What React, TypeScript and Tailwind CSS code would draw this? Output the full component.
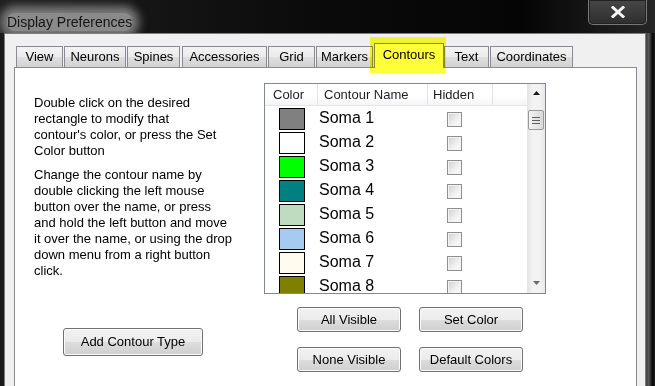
import React from "react";

type Tab = { label: string; className: string; selected?: boolean };

const tabs: Tab[] = [
  { label: "View", className: "ml-[11px] w-[47px]" },
  { label: "Neurons", className: "ml-[1px] w-[62px]" },
  { label: "Spines", className: "ml-[1px] w-[53px]" },
  { label: "Accessories", className: "ml-[2px] w-[85px]" },
  { label: "Grid", className: "ml-[1px] w-[47px]" },
  { label: "Markers", className: "ml-[1px] w-[57px]" },
  { label: "Contours", className: "ml-[1px] w-[70px]", selected: true },
  { label: "Text", className: "ml-0 w-[45px]" },
  { label: "Coordinates", className: "ml-[1px] w-[83px]" },
];

const contours = [
  { name: "Soma 1", swatch: "bg-[#808080]" },
  { name: "Soma 2", swatch: "bg-[#ffffff]" },
  { name: "Soma 3", swatch: "bg-[#00ff00]" },
  { name: "Soma 4", swatch: "bg-[#008080]" },
  { name: "Soma 5", swatch: "bg-[#c0dcc0]" },
  { name: "Soma 6", swatch: "bg-[#a6caf0]" },
  { name: "Soma 7", swatch: "bg-[#fffbf0]" },
  { name: "Soma 8", swatch: "bg-[#808000]" },
];

function WinButton({ label, className }: { label: string; className: string }) {
  return (
    <button
      type="button"
      className={`flex items-center justify-center rounded-[3px] border border-[#707070] bg-[linear-gradient(#f2f2f2_0%,#ebebeb_50%,#dddddd_51%,#cfcfcf_100%)] text-[13px] text-black shadow-[inset_0_0_0_1px_#fbfbfb] ${className}`}
    >
      {label}
    </button>
  );
}

function Checkbox() {
  return (
    <span className="block size-[15px] border border-[#8e8f8f] bg-[linear-gradient(135deg,#cfcfcf,#f2f2f2_60%,#fbfbfb)] shadow-[inset_0_0_0_1px_#f3f3f3]" />
  );
}

function ScrollBar() {
  return (
    <div className="flex h-full w-[18px] flex-col items-center bg-[linear-gradient(90deg,#e3e3e3,#f2f2f2_30%,#f2f2f2_70%,#e8e8e8)]">
      <div className="flex h-[17px] w-full items-center justify-center">
        <svg width="7" height="4" viewBox="0 0 7 4">
          <path d="M3.5 0 L7 4 L0 4 Z" fill="#1a1a1a" />
        </svg>
      </div>
      <div className="mt-[9px] flex h-[20px] w-[16px] flex-col items-center justify-center gap-[2px] rounded-[2px] border border-[#9a9a9a] bg-[linear-gradient(90deg,#f3f3f3,#e6e6e6_50%,#d8d8d8)]">
        <span className="block h-px w-[8px] bg-[#606060]" />
        <span className="block h-px w-[8px] bg-[#606060]" />
        <span className="block h-px w-[8px] bg-[#606060]" />
      </div>
      <div className="flex-1" />
      <div className="flex h-[20px] w-full items-center justify-center">
        <svg width="7" height="4" viewBox="0 0 7 4">
          <path d="M0 0 L7 0 L3.5 4 Z" fill="#6a6a6a" />
        </svg>
      </div>
    </div>
  );
}

function ContourList() {
  return (
    <div className="flex h-[211px] w-[282px] border border-[#828790] bg-white">
      <div className="flex w-[262px] flex-col overflow-hidden">
        <div className="flex h-[22px] shrink-0 border-b border-[#e5e5e5] bg-[linear-gradient(#ffffff_0%,#ffffff_55%,#f4f5f7_100%)] text-[13px] leading-[21px] text-[#1e1e1e]">
          <div className="w-[53px] border-r border-[#e3e3e3] pl-[8px]">Color</div>
          <div className="w-[110px] border-r border-[#e3e3e3] pl-[6px]">Contour Name</div>
          <div className="w-[65px] border-r border-[#e3e3e3] pl-[5px]">Hidden</div>
          <div className="flex-1" />
        </div>
        {contours.map((c) => (
          <div key={c.name} className="flex h-[24px] shrink-0">
            <div className="w-[53px] pl-[14px] pt-[2px]">
              <span className={`block h-[22px] w-[26px] border border-black ${c.swatch}`} />
            </div>
            <div className="flex w-[110px] items-center pl-px text-[16px] text-black">{c.name}</div>
            <div className="w-[65px] pl-[19px] pt-[6px]">
              <Checkbox />
            </div>
          </div>
        ))}
      </div>
      <ScrollBar />
    </div>
  );
}

export default function App() {
  return (
    <div className="relative h-[386px] w-[655px] overflow-hidden bg-black font-['Liberation_Sans',Arial,sans-serif]">
      {/* title bar */}
      <div className="h-[33px] overflow-hidden bg-[linear-gradient(90deg,#1e1e1e_0%,#0a0a0a_50%,#050505_80%,#262626_100%)] pl-[7px] pt-[10px]">
        <span className="inline-block rounded-[8px] bg-[#8a8a8a] text-[14px] leading-[18px] text-[#151515] shadow-[0_0_10px_7px_#7c7c7c]">
          Display Preferences
        </span>
      </div>
      <div className="absolute left-[588px] top-0 flex h-[25px] w-[59px] items-center justify-center rounded-b-[5px] border border-t-0 border-[#777777] bg-[linear-gradient(#474747,#2e2e2e)] shadow-[inset_0_0_0_1px_#222]">
        <svg width="14" height="12" viewBox="0 0 14 12">
          <path d="M2 1.5 L12 10.5 M12 1.5 L2 10.5" stroke="#f4f4f4" strokeWidth="3" strokeLinecap="square" />
        </svg>
      </div>

      <div className="flex">
        <div className="w-[4px] bg-[#1a1a1a]" />
        <div className="h-[353px] w-[642px] border-x border-t border-[#7d7d7d] bg-[#f0f0f0]">
          {/* tabs */}
          <div className="mt-[9px] flex h-[24px] items-end text-[13px] text-black">
            {tabs.map((t) =>
              t.selected ? (
                <div
                  key={t.label}
                  className={`relative z-10 -mb-px flex h-[25px] items-center justify-center border-x border-t border-[#898c95] bg-white pb-[2px] ${t.className}`}
                >
                  {t.label}
                </div>
              ) : (
                <div
                  key={t.label}
                  className={`flex h-[21px] items-center justify-center border-x border-t border-[#898c95] bg-[linear-gradient(#f3f3f3_0%,#ebebeb_50%,#dedede_51%,#d2d2d2_100%)] ${t.className}`}
                >
                  {t.label}
                </div>
              ),
            )}
          </div>

          {/* panel */}
          <div className="ml-[9px] flex h-[330px] w-[623px] border border-[#898c95] bg-white">
            <div className="w-[249px] pl-[19px] pt-[27px] text-[13px] leading-[16px] text-black">
              <p>
                Double click on the desired
                <br />
                rectangle to modify that
                <br />
                contour's color, or press the Set
                <br />
                Color button
              </p>
              <p className="mt-[8px]">
                Change the contour name by
                <br />
                double clicking the left mouse
                <br />
                button over the name, or press
                <br />
                and hold the left button and move
                <br />
                it over the name, or using the drop
                <br />
                down menu from a right button
                <br />
                click.
              </p>
              <WinButton label="Add Contour Type" className="ml-[29px] mt-[49px] h-[28px] w-[140px]" />
            </div>
            <div className="pt-[15px]">
              <ContourList />
              <div className="ml-[33px] mt-[13px] grid w-[226px] grid-cols-2 gap-x-[18px] gap-y-[15px]">
                <WinButton label="All Visible" className="h-[25px] w-[104px]" />
                <WinButton label="Set Color" className="h-[25px] w-[104px]" />
                <WinButton label="None Visible" className="h-[25px] w-[104px]" />
                <WinButton label="Default Colors" className="h-[25px] w-[104px]" />
              </div>
            </div>
          </div>
        </div>
        <div className="h-[353px] w-[9px] bg-[linear-gradient(90deg,#3c3c3c,#5a5a5a_30%,#2a2a2a_55%,#050505_75%,#1e1e1e)]" />
      </div>

      {/* highlight annotation */}
      <div className="pointer-events-none absolute left-[370px] top-[37px] z-20 h-[36px] w-[76px] bg-[#ffff3a] mix-blend-multiply" />
    </div>
  );
}
